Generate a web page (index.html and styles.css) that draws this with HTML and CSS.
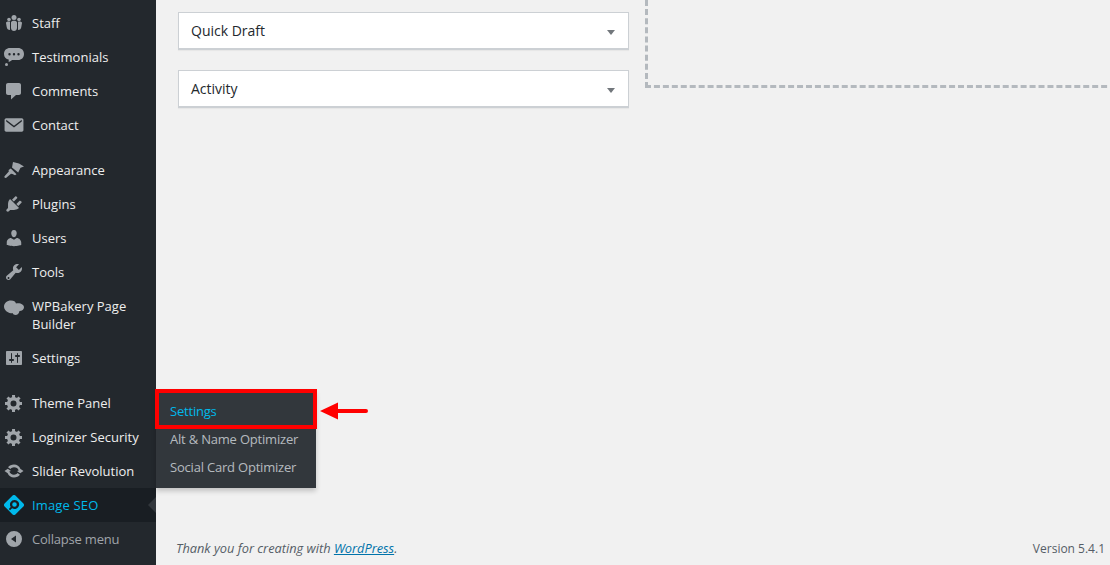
FILE: index.html
```html
<!DOCTYPE html>
<html lang="en">
<head>
<meta charset="utf-8">
<title>Dashboard</title>
<link rel="stylesheet" href="styles.css">
</head>
<body>
<div class="layout">
  <nav class="sidebar">
    <ul class="menu">
      <li class="item"><svg class="ico" viewBox="0 0 20 20"><circle cx="5" cy="6.500" r="1.800"/><circle cx="15" cy="6.500" r="1.800"/><circle cx="10" cy="4.500" r="2.500"/><path d="M2 10c0-1 1-1.500 2.500-1.500.6 0 1 .1 1.500.3V17c-2 0-3-1-3.300-3zM18 10c0-1-1-1.500-2.500-1.500-.6 0-1 .1-1.500.3V17c2 0 3-1 3.300-3zM7 9.500C7 8.300 8.500 7.800 10 7.800s3 .5 3 1.700V15c0 2-1.500 3-3 3s-3-1-3-3z"/></svg><span>Staff</span></li>
      <li class="item"><svg class="ico" viewBox="0 0 20 20"><path fill-rule="evenodd" d="M6 1h8c3.500 0 6 2.300 6 6s-2.500 6-6 6H8c-1 1-2.500 1.800-3.500 1.800.2-.7.3-1.500.2-2.300C2 12 0 10.300 0 7c0-3.700 2.500-6 6-6zM5.500 6a1.200 1.200 0 1 0 0 2.400 1.200 1.200 0 0 0 0-2.400zM10 6a1.200 1.200 0 1 0 0 2.400A1.200 1.200 0 0 0 10 6zM14.500 6a1.200 1.200 0 1 0 0 2.400 1.200 1.200 0 0 0 0-2.400z"/><circle cx="2.500" cy="17.500" r="1.500"/></svg><span>Testimonials</span></li>
      <li class="item"><svg class="ico" viewBox="0 0 20 20"><path d="M4 2h11c1.100 0 2 .9 2 2v8c0 1.100-.9 2-2 2h-3l-5 4.500V14H4c-1.100 0-2-.9-2-2V4c0-1.100.9-2 2-2z"/></svg><span>Comments</span></li>
      <li class="item"><svg class="ico" viewBox="1.500 1 18 18"><path fill-rule="evenodd" d="M3.500 4h14c.83 0 1.500.67 1.500 1.500v9c0 .83-.67 1.500-1.500 1.500h-14C2.670 16 2 15.330 2 14.500v-9C2 4.670 2.670 4 3.500 4zM3.500 5.200L10.500 10.700 17.500 5.200V6.800L10.500 12.300 3.500 6.800z"/></svg><span>Contact</span></li>
      <li class="item gap"><svg class="ico" viewBox="0 0 20 20"><path d="M9 2l6 1.500 5 3-3.500 1.200-2.300 4.800L8 7.500zM6.800 8.500l5.700 5.700-1.500 1-2.500-1.200-1.500-.3-5 4.300c-1 .3-2-.7-1.500-1.700l4.300-4.800-.2-1.500z"/></svg><span>Appearance</span></li>
      <li class="item"><svg class="ico" viewBox="0 0 20 20"><path d="M13.110 4.360L9.870 7.600 8 5.730l3.240-3.240c.35-.34 1.050-.2 1.560.32.520.510.660 1.210.310 1.550zm-8 1.770l.91-1.120 9.010 9.010-1.190.84c-.710.710-2.630 1.160-3.820 1.160H6.140L4.900 17.260c-.59.59-1.540.59-2.120 0-.59-.58-.59-1.530 0-2.120l1.240-1.240v-3.880c0-1.130.4-3.190 1.090-3.890zm7.260 3.970l3.240-3.240c.34-.35 1.040-.21 1.550.31.520.51.660 1.210.310 1.550l-3.240 3.250z"/></svg><span>Plugins</span></li>
      <li class="item"><svg class="ico" viewBox="0 0 20 20"><path d="M10 9.250c-2.270 0-2.730-3.440-2.730-3.440C7 4.020 7.820 2 9.970 2c2.160 0 2.980 2.020 2.710 3.810 0 0-.41 3.440-2.680 3.440zm0 2.570L12.720 10c2.390 0 4.520 2.330 4.520 4.530v2.490s-3.650 1.130-7.240 1.130c-3.650 0-7.240-1.130-7.240-1.130v-2.490c0-2.250 1.940-4.480 4.150-4.480z"/></svg><span>Users</span></li>
      <li class="item"><svg class="ico" viewBox="0 0 20 20"><path d="M16.680 9.770c-1.340 1.340-3.300 1.670-4.950.99l-5.410 6.520c-.99.99-2.590.99-3.570 0-.99-.98-.99-2.580 0-3.570l6.520-5.420c-.68-1.650-.35-3.610.99-4.950 1.280-1.280 3.120-1.620 4.720-1.060l-2.890 2.890 2.820 2.820 2.860-2.870c.53 1.580.18 3.400-1.090 4.670zM3.810 16.740c.390.390 1.030.390 1.420 0 .38-.38.38-1.020 0-1.410-.39-.39-1.030-.39-1.420 0-.38.390-.38 1.030 0 1.410z"/></svg><span>Tools</span></li>
      <li class="item"><svg class="ico" viewBox="0 0 20 20"><path d="M7 4.500c3 0 4.500 1.200 5 3 1-.5 3-.5 4.500 0 2 .7 3.500 2 3.500 3.800 0 2.200-2 3.700-4.500 3.700-.5 2.500-2 4-4 4-1.500 0-2.500-.7-3-2-1 .5-3 .5-4.500-.7C1.500 15 0 13 0 10.800 0 7 3 4.500 7 4.500z"/></svg><span>WPBakery Page Builder</span></li>
      <li class="item"><svg class="ico" viewBox="0 0 20 20"><path d="M18 16V4c0-.55-.45-1-1-1H3c-.55 0-1 .45-1 1v12c0 .55.45 1 1 1h14c.55 0 1-.45 1-1zM8 11h1c.55 0 1 .45 1 1s-.45 1-1 1H8v1.500c0 .28-.22.5-.5.5s-.5-.22-.5-.5V13H6c-.55 0-1-.45-1-1s.45-1 1-1h1V5.500c0-.28.22-.5.5-.5s.5.22.5.5V11zm5-2h-1c-.55 0-1-.45-1-1s.45-1 1-1h1V5.500c0-.28.22-.5.5-.5s.5.22.5.5V7h1c.55 0 1 .45 1 1s-.45 1-1 1h-1v5.500c0 .28-.22.5-.5.5s-.5-.22-.5-.5V9z"/></svg><span>Settings</span></li>
      <li class="item gap"><svg class="ico" viewBox="0 0 20 20"><path fill-rule="evenodd" d="M18 12h-2.180c-.17.7-.44 1.350-.81 1.930l1.540 1.540-2.100 2.100-1.540-1.540c-.58.360-1.230.640-1.910.810V19H8v-2.180c-.68-.17-1.330-.45-1.910-.81l-1.540 1.540-2.120-2.120 1.540-1.540c-.36-.58-.64-1.230-.81-1.910H1V9h2.180c.17-.7.45-1.350.82-1.940L2.460 5.520l2.100-2.100 1.540 1.540c.59-.37 1.240-.65 1.940-.82V2h3v2.180c.68.17 1.330.44 1.910.81l1.540-1.540 2.120 2.120-1.540 1.540c.36.58.64 1.230.81 1.910H18zM9.500 7.500a3 3 0 1 0 0 6 3 3 0 0 0 0-6z"/></svg><span>Theme Panel</span></li>
      <li class="item"><svg class="ico" viewBox="0 0 20 20"><path fill-rule="evenodd" d="M18 12h-2.180c-.17.7-.44 1.350-.81 1.930l1.540 1.540-2.100 2.100-1.540-1.540c-.58.360-1.230.640-1.910.810V19H8v-2.180c-.68-.17-1.330-.45-1.910-.81l-1.540 1.540-2.120-2.120 1.540-1.540c-.36-.58-.64-1.230-.81-1.910H1V9h2.180c.17-.7.45-1.350.82-1.940L2.460 5.520l2.100-2.100 1.540 1.540c.59-.37 1.240-.65 1.940-.82V2h3v2.180c.68.17 1.330.44 1.910.81l1.540-1.540 2.120 2.120-1.540 1.540c.36.58.64 1.230.81 1.910H18zM9.500 7.500a3 3 0 1 0 0 6 3 3 0 0 0 0-6z"/></svg><span>Loginizer Security</span></li>
      <li class="item"><svg class="ico" viewBox="0 0 20 20"><path d="M10 3.500c3 0 5.500 1.700 6.300 4.300L19.500 10l-3.300 2.300L13 10l1.700-.6C14 7.500 12.300 6.300 10 6.300 8.600 6.300 7.300 7 6.400 8L4 6.300C5.400 4.500 7.500 3.500 10 3.500zM3.800 7.700L7 10l-1.700.6C6 12.500 7.700 13.700 10 13.700c1.400 0 2.700-.7 3.600-1.700l2.400 1.700c-1.400 1.800-3.500 2.800-6 2.800-3 0-5.500-1.700-6.300-4.300L.5 10z"/></svg><span>Slider Revolution</span></li>
      <li class="item current"><svg class="ico logo" viewBox="0 0 20 20"><path fill-rule="evenodd" d="M8.600.6a2 2 0 0 1 2.800 0l8 8a2 2 0 0 1 0 2.800l-8 8a2 2 0 0 1-2.800 0l-8-8a2 2 0 0 1 0-2.800zM10.500 5a4.500 4.500 0 0 0-3.800 6.900L4.800 14l1.200 1.200 2.100-2a4.500 4.500 0 1 0 2.400-8.200zM10.500 7.200a2.300 2.300 0 1 1 0 4.600 2.300 2.300 0 0 1 0-4.600z"/></svg><span>Image SEO</span></li>
      <li class="item collapse"><svg class="ico" viewBox="0 0 20 20"><path fill-rule="evenodd" d="M10 2a8 8 0 1 1 0 16 8 8 0 0 1 0-16zM12 6.500L7 10l5 3.500z"/></svg><span>Collapse menu</span></li>
    </ul>
  </nav>
  <main class="content">
    <div class="columns">
      <div class="col">
        <section class="box"><h2>Quick Draft</h2><i class="caret"></i></section>
        <section class="box"><h2>Activity</h2><i class="caret"></i></section>
      </div>
      <div class="drop"></div>
    </div>
    <footer class="foot">
      <em class="thanks">Thank you for creating with <a href="#">WordPress</a>.</em>
      <span class="version">Version 5.4.1</span>
    </footer>
  </main>
</div>
<ul class="submenu">
  <li class="sub active">Settings</li>
  <li class="sub">Alt &amp; Name Optimizer</li>
  <li class="sub">Social Card Optimizer</li>
</ul>
<div class="highlight"></div>
<svg class="arrow" viewBox="0 0 48 18"><path d="M0 9L18 .5V7h28a2 2 0 0 1 0 4H18v6.500z"/></svg>
</body>
</html>
```
FILE: styles.css
```css
* { box-sizing: border-box; }
html, body { margin: 0; height: 565px; overflow: hidden; }
body { background: #f1f1f1; font-family: "Open Sans", "Noto Sans", sans-serif; font-size: 13px; color: #23282d; position: relative; }
.layout { display: flex; height: 565px; }
.sidebar { width: 156px; flex: none; background: #23282d; padding-top: 6px; }
.menu { list-style: none; margin: 0; padding: 0; }
.item { display: flex; align-items: center; min-height: 34px; padding: 8px 8px 8px 32px; line-height: 18px; color: #eee; position: relative; }
.item.gap { margin-top: 11px; }
.ico { position: absolute; left: 4px; top: 7px; width: 20px; height: 20px; fill: #a0a5aa; }
.current { background: #191e23; color: #00b9eb; letter-spacing: .15px; }
.current::after { content: ""; position: absolute; right: 0; top: 9px; border: 8px solid transparent; border-right-color: #32373c; border-left-width: 0; }
.logo { fill: #00b9eb; }
.collapse { color: #a0a5aa; letter-spacing: -.2px; }
.content { flex: 1; min-width: 0; display: flex; flex-direction: column; padding: 0 5px 0 22px; }
.columns { flex: 1; display: flex; gap: 16px; align-items: flex-start; }
.col { width: 451px; flex: none; padding-top: 12px; display: flex; flex-direction: column; gap: 20px; }
.box { height: 38px; background: #fff; border: 1px solid #ccd0d4; border-bottom-width: 2px; box-shadow: 0 1px 1px rgba(0,0,0,.04); display: flex; align-items: center; justify-content: space-between; padding: 0 13px 0 12px; }
.box h2 { margin: 0; font-size: 14px; font-weight: 500; color: #23282d; }
.caret { width: 0; height: 0; border: 4px solid transparent; border-top: 5px solid #72777c; border-bottom-width: 0; margin-top: 3px; }
.drop { flex: 1; height: 88px; margin-right: -20px; border: 3px dashed #b4b9be; border-top: 0; border-right: 0; }
.foot { display: flex; justify-content: space-between; align-items: center; height: 34px; margin-left: -2px; color: #555d66; }
.thanks { font-size: 12.800px; }
.version { font-size: 12px; }
.foot a { color: #0073aa; }
.submenu { position: absolute; left: 156px; top: 390px; width: 160px; margin: 0; padding: 7px 0; list-style: none; background: #32373c; box-shadow: 0 3px 5px rgba(0,0,0,.2); }
.sub { height: 28px; line-height: 28px; padding-left: 14px; font-size: 13px; color: rgba(240,245,250,.7); letter-spacing: -.2px; }
.sub.active { color: #00b9eb; }
.highlight { position: absolute; left: 155px; top: 389px; width: 162px; height: 40px; border: 4px solid #f00; }
.arrow { position: absolute; left: 320px; top: 402px; width: 48px; height: 18px; fill: #f00; }
```
